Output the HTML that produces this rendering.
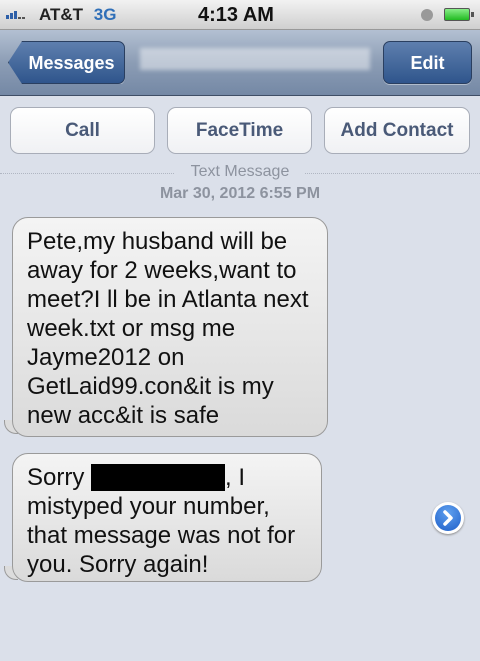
<!DOCTYPE html>
<html><head><style>
*{margin:0;padding:0;box-sizing:border-box}
body{width:480px;height:661px;overflow:hidden;background:#dbe0ea;font-family:"Liberation Sans",Arial,sans-serif;position:relative}
.sb{position:absolute;left:0;top:0;width:480px;height:30px;background:linear-gradient(#f2f2f2,#cfcfcf);border-bottom:1px solid #999}
.nav{position:absolute;left:0;top:30px;width:480px;height:66px;background:linear-gradient(#b3c0d2,#8c9db5 50%,#7488a5);border-bottom:1px solid #3f4e66}
.btn{position:absolute;border-radius:7px;background:linear-gradient(#5e7fae,#2f558c);border:1px solid #2a3f60;color:#fff;font-weight:bold;font-size:18px;text-align:center;line-height:42px;box-shadow:0 1px 0 rgba(255,255,255,.4)}
.ab{position:absolute;top:107px;height:47px;border:1px solid #a8adb8;border-radius:9px;background:linear-gradient(#fff,#f0f1f4);color:#4a5a78;font-weight:bold;font-size:19px;text-align:center;line-height:45px}
.bub{position:absolute;left:12px;background:linear-gradient(#f4f4f4,#dadada);border:1px solid #9a9a9a;border-radius:16px;font-size:24px;line-height:29px;color:#111;padding:9px 0 0 14px;white-space:nowrap}
.tail{position:absolute;left:4px;width:14px;height:14px;background:#dcdcdc;border-left:1px solid #9a9a9a;border-bottom:1px solid #9a9a9a;border-bottom-left-radius:12px}
</style></head><body>
<div class="sb">
<div style="position:absolute;left:6px;top:11px;font-size:0">
<span style="display:inline-block;width:3px;height:4px;background:#2d5fa8;margin-right:1px;vertical-align:bottom"></span><span style="display:inline-block;width:3px;height:6px;background:#2d5fa8;margin-right:1px;vertical-align:bottom"></span><span style="display:inline-block;width:3px;height:8px;background:#2d5fa8;margin-right:1px;vertical-align:bottom"></span><span style="display:inline-block;width:3px;height:2px;background:#555;margin-right:1px;vertical-align:bottom"></span><span style="display:inline-block;width:3px;height:2px;background:#555;vertical-align:bottom"></span></div>
<div style="position:absolute;left:39px;top:5px;font-size:17px;font-weight:bold;color:#222">AT&amp;T <span style="color:#2f6fb8;margin-left:6px">3G</span></div>
<div style="position:absolute;left:198px;top:4px;font-size:20px;font-weight:bold;color:#111">4:13 AM</div>
<div style="position:absolute;left:421px;top:9px;width:12px;height:12px;border-radius:50%;background:#999"></div>
<div style="position:absolute;left:444px;top:8px;width:26px;height:13px;border:1px solid #555;background:linear-gradient(#8e8,#2b2);border-radius:2px"></div>
<div style="position:absolute;left:471px;top:12px;width:3px;height:5px;background:#555"></div>
</div>
<div class="nav">
<div class="btn" style="left:8px;top:11px;width:117px;height:43px;border-radius:4px 7px 7px 4px;clip-path:polygon(14px 0,100% 0,100% 100%,14px 100%,0 50%);padding-left:10px">Messages</div>
<div style="position:absolute;left:140px;top:18px;width:230px;height:22px;background:rgba(255,255,255,.45);filter:blur(2px)"></div>
<div class="btn" style="left:383px;top:11px;width:89px;height:43px">Edit</div>
</div>
<div class="ab" style="left:10px;width:145px">Call</div>
<div class="ab" style="left:167px;width:145px">FaceTime</div>
<div class="ab" style="left:324px;width:146px">Add Contact</div>
<div style="position:absolute;left:0;top:173px;width:480px;border-top:1px dotted #b0b6c2"></div>
<div style="position:absolute;left:175px;top:163px;width:130px;text-align:center;background:#dbe0ea;color:#8d939f;font-size:16px">Text Message</div>
<div style="position:absolute;left:0;top:185px;width:480px;text-align:center;color:#8d939f;font-size:16px;font-weight:bold">Mar 30, 2012 6:55 PM</div>
<div class="tail" style="top:420px"></div>
<div class="bub" style="top:217px;width:316px;height:220px">Pete,my husband will be<br>away for 2 weeks,want to<br>meet?I ll be in Atlanta next<br>week.txt or msg me<br>Jayme2012 on<br>GetLaid99.con&amp;it is my<br>new acc&amp;it is safe</div>
<div class="tail" style="top:566px"></div>
<div class="bub" style="top:453px;width:310px;height:129px">Sorry <span style="display:inline-block;width:134px;height:27px;background:#000;vertical-align:-6px"></span>, I<br>mistyped your number,<br>that message was not for<br>you. Sorry again!</div>
<div style="position:absolute;left:432px;top:502px;width:32px;height:32px;border-radius:50%;background:#fff;box-shadow:0 1px 2px #888"></div>
<div style="position:absolute;left:435px;top:505px;width:26px;height:26px;border-radius:50%;background:radial-gradient(circle at 50% 30%,#5fa0ef,#1f5fc8)"></div>
<svg style="position:absolute;left:435px;top:505px" width="26" height="26"><path d="M10 7 L16 13 L10 19" fill="none" stroke="#fff" stroke-width="3.5" stroke-linecap="round" stroke-linejoin="round"/></svg>
</body></html>
